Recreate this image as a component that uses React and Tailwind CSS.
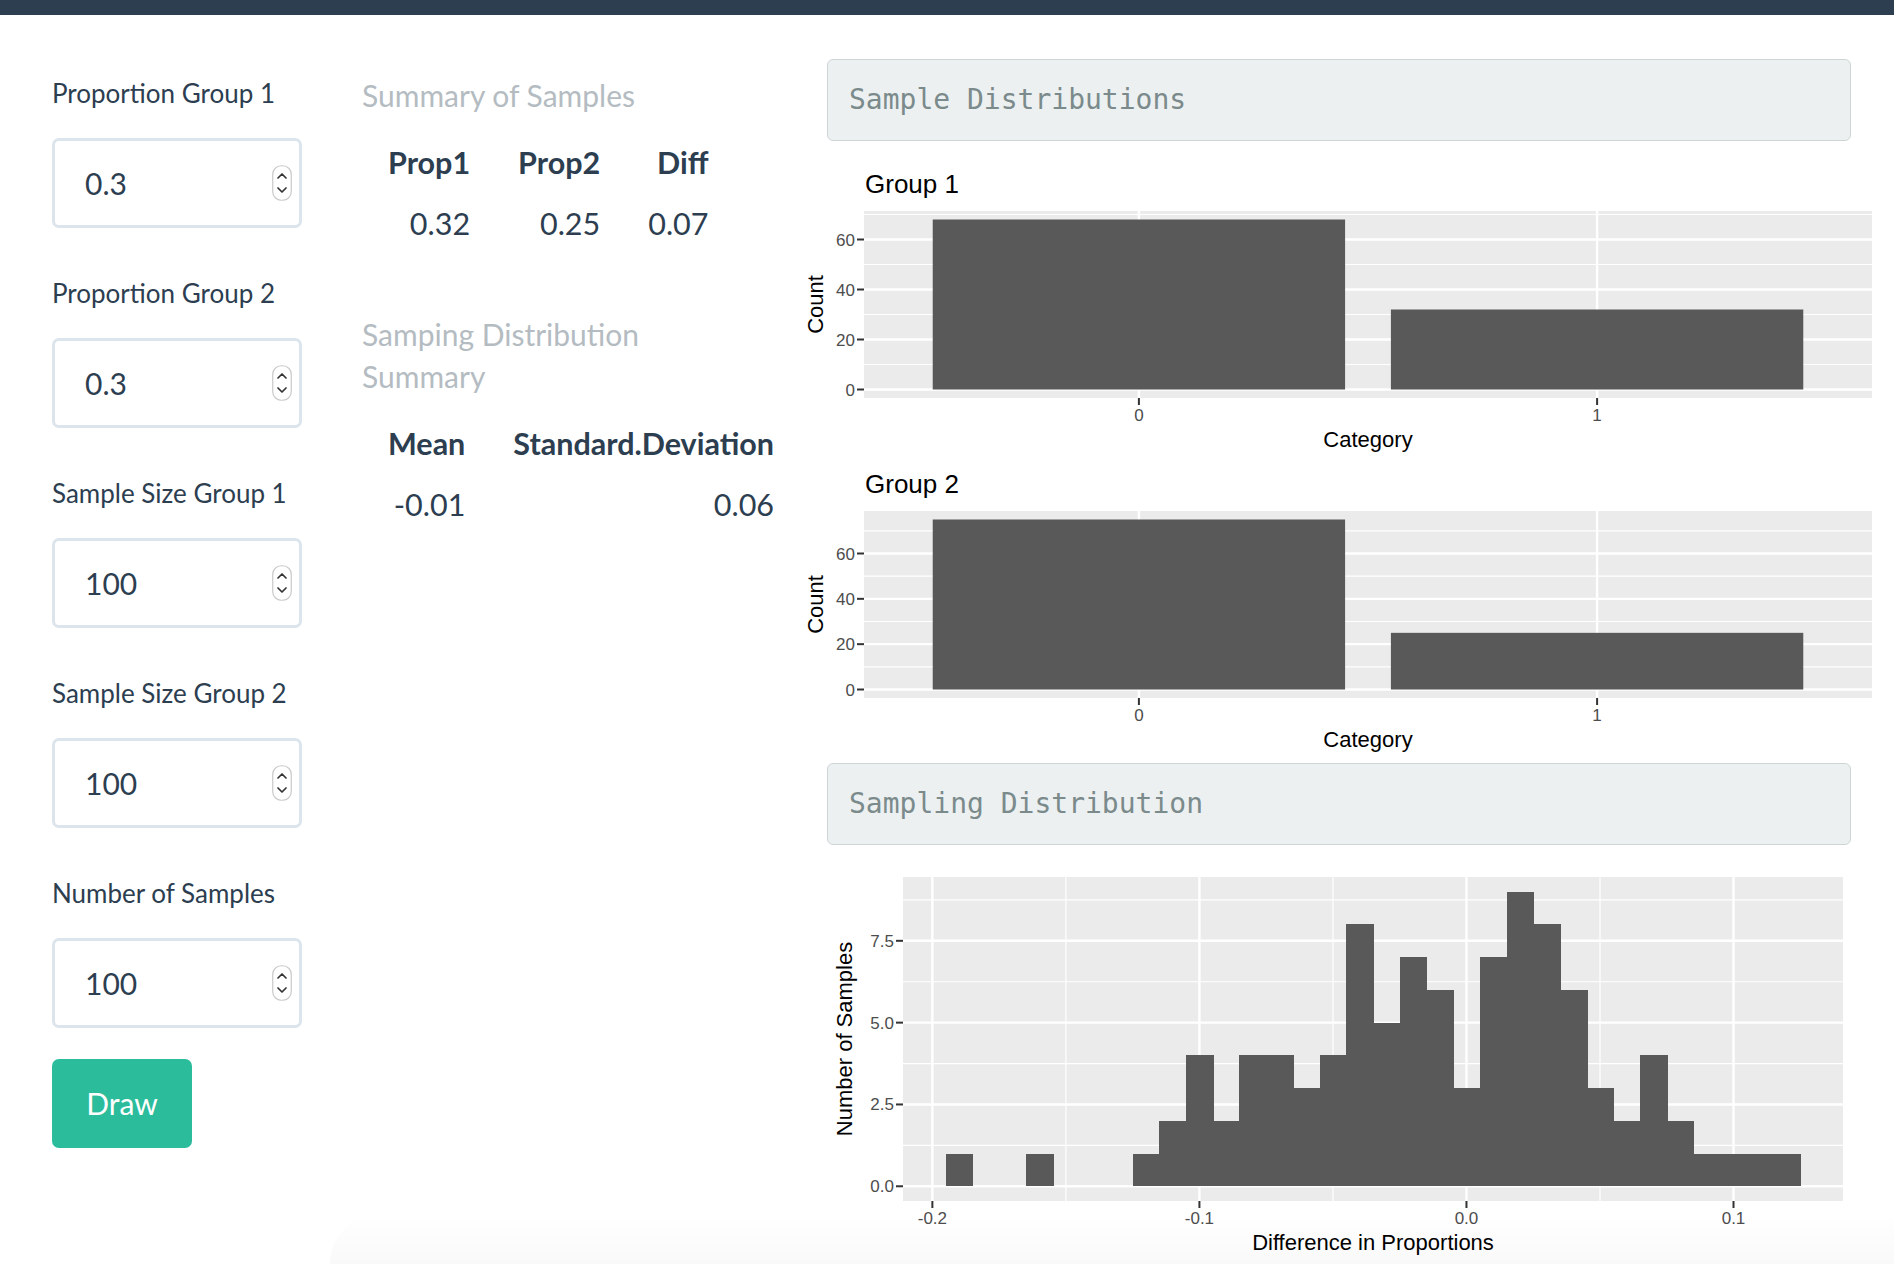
import React from "react";

const fields = [
  { label: "Proportion Group 1", value: "0.3" },
  { label: "Proportion Group 2", value: "0.3" },
  { label: "Sample Size Group 1", value: "100" },
  { label: "Sample Size Group 2", value: "100" },
  { label: "Number of Samples", value: "100" },
];

// histogram counts, bin width 0.01, first bin starts at -0.195
const histBins = [
  1, 0, 0, 1, 0, 0, 0, 1, 2, 4, 2, 4, 4, 3, 4, 8, 5, 7, 6, 3, 7, 9, 8, 6, 3, 2, 4, 2, 1, 1, 1, 1,
];

function Spinner() {
  return (
    <svg width="20" height="36" viewBox="0 0 20 36" className="shrink-0">
      <rect x="0.75" y="0.75" width="18.5" height="34.5" rx="8.5" fill="#fff" stroke="#c9c9c9" strokeWidth="1.2" />
      <path d="M6 13 L10 9 L14 13" fill="none" stroke="#333" strokeWidth="1.7" strokeLinecap="round" strokeLinejoin="round" />
      <path d="M6 23 L10 27 L14 23" fill="none" stroke="#333" strokeWidth="1.7" strokeLinecap="round" strokeLinejoin="round" />
    </svg>
  );
}

function NumberField({ label, value }) {
  return (
    <div className="mb-[48px]">
      <div className="pt-[2px] text-[26px] leading-[31px] text-[#2c3e50]">{label}</div>
      <div className="mt-[29px] flex h-[90px] w-[250px] items-center justify-between rounded-[7px] border-[3px] border-[#dce4ec] bg-white pl-[30px] pr-[7px]">
        <span className="text-[30px] text-[#2c3e50]">{value}</span>
        <Spinner />
      </div>
    </div>
  );
}

function StatTable({ head, rows }) {
  return (
    <table className="border-collapse text-[30.5px] text-[#2c3e50]">
      <thead>
        <tr className="h-[61px]">
          {head.map((h) => (
            <th key={h} className="px-[24px] text-right font-bold leading-[36px] first:pl-[26px]">
              {h}
            </th>
          ))}
        </tr>
      </thead>
      <tbody>
        {rows.map((r, i) => (
          <tr key={i} className="h-[62px]">
            {r.map((c, j) => (
              <td key={j} className="px-[24px] text-right leading-[36px] first:pl-[26px]">
                {c}
              </td>
            ))}
          </tr>
        ))}
      </tbody>
    </table>
  );
}

function Well({ children }) {
  return (
    <div className="ml-[27px] flex h-[82px] w-[1024px] items-center rounded-[6px] border-[1.5px] border-[#cfd5d6] bg-[#ecf0f1] pl-[21px] font-['DejaVu_Sans_Mono',monospace] text-[28px] text-[#7b8a8b]">
      {children}
    </div>
  );
}

function BarPlot({ title, counts, ymax }) {
  const px0 = 64, px1 = 1072, py0 = 55, py1 = 242;
  const lo = -ymax * 0.05, hi = ymax * 1.05;
  const ys = (v) => py1 - ((v - lo) * (py1 - py0)) / (hi - lo);
  const xs = (v) => px0 + ((v - 0.4) * (px1 - px0)) / 2.2;
  return (
    <svg width="1094" height="300" className="block overflow-visible font-['Liberation_Sans',Arial,sans-serif]">
      <text x="65" y="37" fontSize="26" fill="#000">{title}</text>
      <rect x={px0} y={py0} width={px1 - px0} height={py1 - py0} fill="#ebebeb" />
      {[10, 30, 50, 70].map((v) => (
        <line key={"m" + v} x1={px0} x2={px1} y1={ys(v)} y2={ys(v)} stroke="#fff" strokeWidth="1.2" />
      ))}
      {[0, 20, 40, 60].map((v) => (
        <line key={"M" + v} x1={px0} x2={px1} y1={ys(v)} y2={ys(v)} stroke="#fff" strokeWidth="2.4" />
      ))}
      {[1, 2].map((c) => (
        <line key={"v" + c} x1={xs(c)} x2={xs(c)} y1={py0} y2={py1} stroke="#fff" strokeWidth="2.4" />
      ))}
      {counts.map((n, i) => (
        <rect key={i} x={xs(i + 1 - 0.45)} y={ys(n)} width={xs(1.45) - xs(0.55)} height={ys(0) - ys(n)} fill="#595959" />
      ))}
      {[0, 20, 40, 60].map((v) => (
        <g key={"t" + v}>
          <line x1="57" x2={px0} y1={ys(v)} y2={ys(v)} stroke="#333" strokeWidth="2" />
          <text x="55" y={ys(v) + 6} fontSize="17" fill="#4d4d4d" textAnchor="end">{v}</text>
        </g>
      ))}
      {[1, 2].map((c) => (
        <g key={"x" + c}>
          <line x1={xs(c)} x2={xs(c)} y1={py1} y2={py1 + 7} stroke="#333" strokeWidth="2" />
          <text x={xs(c)} y="265" fontSize="17" fill="#4d4d4d" textAnchor="middle">{c - 1}</text>
        </g>
      ))}
      <text x="568" y="291" fontSize="22" fill="#000" textAnchor="middle">Category</text>
      <text x="23" y="148.5" fontSize="22" fill="#000" textAnchor="middle" transform="rotate(-90 23 148.5)">Count</text>
    </svg>
  );
}

function Histogram() {
  const px0 = 103, px1 = 1043, py0 = 32, py1 = 356;
  const xs = (v) => px0 + ((v + 0.211) * (px1 - px0)) / 0.352;
  const ys = (v) => py1 - ((v + 0.45) * (py1 - py0)) / 9.9;
  return (
    <svg width="1094" height="419" className="relative block overflow-visible font-['Liberation_Sans',Arial,sans-serif]">
      <rect x={px0} y={py0} width={px1 - px0} height={py1 - py0} fill="#ebebeb" />
      {[1.25, 3.75, 6.25, 8.75].map((v) => (
        <line key={"hm" + v} x1={px0} x2={px1} y1={ys(v)} y2={ys(v)} stroke="#fff" strokeWidth="1.2" />
      ))}
      {[-0.15, -0.05, 0.05].map((v) => (
        <line key={"vm" + v} x1={xs(v)} x2={xs(v)} y1={py0} y2={py1} stroke="#fff" strokeWidth="1.2" />
      ))}
      {[0, 2.5, 5, 7.5].map((v) => (
        <line key={"hM" + v} x1={px0} x2={px1} y1={ys(v)} y2={ys(v)} stroke="#fff" strokeWidth="2.4" />
      ))}
      {[-0.2, -0.1, 0, 0.1].map((v) => (
        <line key={"vM" + v} x1={xs(v)} x2={xs(v)} y1={py0} y2={py1} stroke="#fff" strokeWidth="2.4" />
      ))}
      <g shapeRendering="crispEdges">
        {histBins.map((n, i) =>
          n > 0 ? (
            <rect
              key={i}
              x={Math.round(xs(-0.195 + i * 0.01))}
              y={Math.round(ys(n))}
              width={Math.round(xs(-0.185 + i * 0.01)) - Math.round(xs(-0.195 + i * 0.01)) + 0.5}
              height={Math.round(ys(0)) - Math.round(ys(n))}
              fill="#595959"
            />
          ) : null
        )}
      </g>
      {[0, 2.5, 5, 7.5].map((v) => (
        <g key={"yt" + v}>
          <line x1="96" x2={px0} y1={ys(v)} y2={ys(v)} stroke="#333" strokeWidth="2" />
          <text x="94" y={ys(v) + 6} fontSize="17" fill="#4d4d4d" textAnchor="end">{v.toFixed(1)}</text>
        </g>
      ))}
      {[-0.2, -0.1, 0, 0.1].map((v) => (
        <g key={"xt" + v}>
          <line x1={xs(v)} x2={xs(v)} y1={py1} y2={py1 + 7} stroke="#333" strokeWidth="2" />
          <text x={xs(v)} y="379" fontSize="17" fill="#4d4d4d" textAnchor="middle">{v.toFixed(1)}</text>
        </g>
      ))}
      <text x="573" y="405" fontSize="22" fill="#000" textAnchor="middle">Difference in Proportions</text>
      <text x="52" y="194" fontSize="22" fill="#000" textAnchor="middle" transform="rotate(-90 52 194)">Number of Samples</text>
    </svg>
  );
}

export default function App() {
  return (
    <div className="relative h-[1264px] w-[1894px] overflow-hidden bg-white font-[Lato,sans-serif]">
      <div className="pointer-events-none absolute bottom-0 left-[330px] right-0 h-[50px] rounded-tl-[200px] bg-linear-to-t from-[#f9f9f9] to-white" />
      <div className="relative h-[15px] bg-[#2c3e50]" />
      <div className="relative flex">
        {/* inputs */}
        <div className="w-[362px] shrink-0 pl-[52px] pt-[61px]">
          {fields.map((f) => (
            <NumberField key={f.label} {...f} />
          ))}
          <button className="-mt-[17px] flex h-[89px] w-[140px] items-center justify-center rounded-[7px] bg-[#2bbc9c] text-[30px] text-white">
            Draw
          </button>
        </div>

        {/* summaries */}
        <div className="w-[438px] shrink-0 pt-[62px]">
          <h4 className="text-[30px] leading-[36px] text-[#b4bcc2]">Summary of Samples</h4>
          <div className="mt-[18px]">
            <StatTable head={["Prop1", "Prop2", "Diff"]} rows={[["0.32", "0.25", "0.07"]]} />
          </div>
          <h4 className="mt-[59px] w-[380px] text-[30px] leading-[42px] text-[#b4bcc2]">Samping Distribution Summary</h4>
          <div className="mt-[15px]">
            <StatTable head={["Mean", "Standard.Deviation"]} rows={[["-0.01", "0.06"]]} />
          </div>
        </div>

        {/* plots */}
        <div className="w-[1094px] shrink-0 pt-[44px]">
          <Well>Sample Distributions</Well>
          <div className="mt-[15px]">
            <BarPlot title="Group 1" counts={[68, 32]} ymax={68} />
            <BarPlot title="Group 2" counts={[75, 25]} ymax={75} />
          </div>
          <div className="mt-[7px]">
            <Well>Sampling Distribution</Well>
          </div>
          <Histogram />
        </div>
      </div>
    </div>
  );
}
